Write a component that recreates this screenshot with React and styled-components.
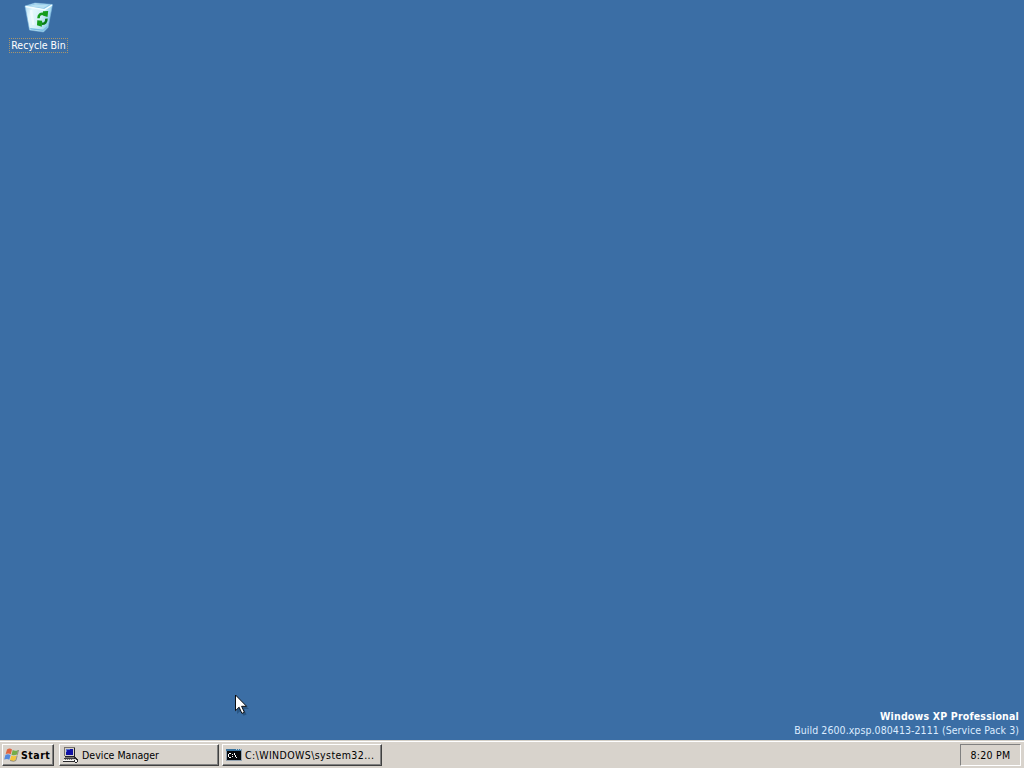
import React from 'react';
import styled, { createGlobalStyle } from 'styled-components';

const tasks = [
    { id: 1, title: 'Device Manager', icon: ComputerIcon, spacing: '0.02px' },
    { id: 2, title: 'C:\\WINDOWS\\system32...', icon: ConsoleIcon, spacing: '0.4px' },
];

export default function App(){
    return(
        <Screen>
            <GlobalStyle />
            <Desktop>
                <Shortcut>
                    <RecycleBinIcon />
                    <ShortcutName>Recycle Bin</ShortcutName>
                </Shortcut>
                <Version>
                    <Edition $spacing="0.19px">Windows XP Professional</Edition>
                    <Build $spacing="0.07px">Build 2600.xpsp.080413-2111 (Service Pack 3)</Build>
                </Version>
            </Desktop>
            <Taskbar>
                <StartButton>
                    <WindowsLogo />
                    <StartText $spacing="0.5px">Start</StartText>
                </StartButton>
                <TaskList>
                    {tasks.map(({ id, title, icon: Icon, spacing }) => (
                        <TaskButton key={id}>
                            <Icon />
                            <Label $spacing={spacing}>{title}</Label>
                        </TaskButton>
                    ))}
                </TaskList>
                <Tray>
                    <Label $spacing="0.3px">8:20 PM</Label>
                </Tray>
            </Taskbar>
            <Pointer />
        </Screen>
    )
}

function RecycleBinIcon(){
    return(
        <svg width="32" height="34" viewBox="0 0 32 34">
            <defs>
                <linearGradient id="glass" x1="0" y1="0" x2="1" y2="0.4">
                    <stop offset="0" stopColor="#a5d6f2" />
                    <stop offset="0.3" stopColor="#e6f8fd" />
                    <stop offset="0.65" stopColor="#d3f1f8" />
                    <stop offset="1" stopColor="#8fcdec" />
                </linearGradient>
            </defs>
            <path d="M2 6 12 3l17.5 1.5L25 27.5 20.5 32 6.5 30z" fill="url(#glass)" stroke="#7db8df" strokeWidth="0.6" />
            <path d="m2.7 6.3 9.3-2.8 17 1.5-7.5 4.5z" fill="#8cc7e9" />
            <path d="m5 6.3 7.5-2 13 1-5 2.7z" fill="#b6e0f2" />
            <path d="m2.5 6.5 19 3.2L29 5" fill="none" stroke="#f4ffff" strokeWidth="1.4" />
            <path d="m7 28 13 1.5 4.5-3.7-.6 2.2-3.9 3-12.3-1.4z" fill="#79bce4" />
            <path d="m8 10 2.5 15" stroke="#f5feff" strokeWidth="2.5" opacity="0.7" />
            <path d="M15.5 18.2c0-3.5 2.3-5 5-4.2" fill="none" stroke="#149c1b" strokeWidth="2.6" />
            <path d="m20 11.2 5.2-.2-.7 6-4.7-1.4z" fill="#149c1b" />
            <path d="M23.4 18.7c.3 3.4-1.6 5.2-4.7 5.1" fill="none" stroke="#087b16" strokeWidth="2.6" />
            <path d="m14.3 20.2 4.8.5-.3 6-4.8-1.5z" fill="#149c1b" />
        </svg>
    )
}

function WindowsLogo(){
    return(
        <svg width="16" height="16" viewBox="0 0 16 16">
            <path d="M3 2.4c2-1.2 3.5-1 5 .1L6.8 7.3C5.2 6.2 3.7 6.1 1.7 7z" fill="#df6540" />
            <path d="M8.7 3c1.7 1 3.2 1 5.5-.1l-1.3 4.7c-2 1-3.7 1-5.4.1z" fill="#75ad49" />
            <path d="M1.5 7.8c2-.9 3.5-.8 5.1.3l-1.3 4.7c-1.5-1.1-3.1-1.1-5.1-.2z" fill="#5489dd" />
            <path d="M7.3 8.5c1.7 1 3.3.9 5.4-.1l-1.3 4.8c-2.1 1.1-3.7 1-5.4 0z" fill="#f3c43a" />
            <path d="m14.6 3-1.3 4.9M13.2 8.6l-1.3 4.9-2.4.8-3.5-.8" fill="none" stroke="#77725f" strokeWidth="0.7" />
        </svg>
    )
}

function ComputerIcon(){
    return(
        <svg width="16" height="16" viewBox="0 0 16 16" shapeRendering="crispEdges">
            <path d="M1 0h11v10H1z" fill="#d4d0c8" />
            <path d="M1 0h11v1H2v8H1z" fill="#77736e" />
            <path d="M11 1h1v9H2V9h9z" fill="#22212d" />
            <path d="M3 2h7v6H3z" fill="#1010a4" />
            <path d="M3 2h4v1H3zM3 3h1v2H3z" fill="#5470d5" />
            <path d="M2 10h9v1H2z" fill="#77736e" />
            <path d="M1 11h11v2H1z" fill="#d8d5d0" />
            <path d="M1 11h11v1H1z" fill="#3b3b42" />
            <path d="M2 12h1v1H2zM4 12h1v1H4zM6 12h1v1H6zM8 12h1v1H8z" fill="#77736e" />
            <path d="M0 13h12v1H0z" fill="#f8f8f8" />
            <path d="M0 14h12v1H0z" fill="#29282b" />
            <path d="M11 10h2v1h1v1h1v3h-1v1h-2v-1h-1v-2h2v-1h-2z" fill="#29282b" />
            <path d="M12 13h2v2h-2z" fill="#f8f8f8" />
        </svg>
    )
}

function ConsoleIcon(){
    return(
        <svg width="16" height="16" viewBox="0 0 16 16" shapeRendering="crispEdges">
            <path d="M0 2h16v12H0z" fill="#92a1b0" />
            <path d="M0 2h15v2H0z" fill="#39739f" />
            <path d="M10 2h1v1h-1zM12 2h1v1h-1zM14 2h1v1h-1z" fill="#b2cede" />
            <path d="M1 4h14v9H1z" fill="#05080b" />
            <path d="M3 6h2v1H3v3h2v1H3v-1H2V7h1zM6 7h1v1H6zM6 9h1v1H6zM8 6h1v2h1v2h1v1h-1v-1H9V8H8z" fill="#fff" />
        </svg>
    )
}

function Pointer(){
    return(
        <PointerArrow width="14" height="23" viewBox="0 0 14 23">
            <path d="M2 3v17l4-3.6 2.5 5.4 3-1.4L9 15h5z" fill="#173d64" opacity="0.5" />
            <path d="M.5 1v15.7l3.6-3.5 2.8 6.2 2.5-1.1-2.8-6h5z" fill="#fff" stroke="#080b10" strokeWidth="1" />
        </PointerArrow>
    )
}

const GlobalStyle = createGlobalStyle`
    *{
        box-sizing:border-box;
    }
    body{
        margin:0;
        overflow:hidden;
        font:11px/14px "DejaVu Sans Condensed", "DejaVu Sans", sans-serif;
        font-stretch:condensed;
    }
    svg{
        display:block;
        flex:none;
    }
`;
const Screen = styled.main`
    width:100vw;
    height:100vh;
    display:flex;
    flex-direction:column;
    cursor:default;
`;
const Desktop = styled.section`
    flex:1;
    display:flex;
    flex-direction:column;
    justify-content:space-between;
    background:#3b6ea5;
    color:white;
`;
const Shortcut = styled.div`
    width:77px;
    display:flex;
    flex-direction:column;
    align-items:center;
`;
const Label = styled.span`
    font-size:10.5px;
    line-height:14px;
    letter-spacing:${({ $spacing }) => $spacing || '0'};
    white-space:nowrap;
`;
const ShortcutName = styled(Label)`
    margin-top:4px;
    padding:0 1px;
    border:1px dotted #a9956b;
    line-height:13px;
`;
const Version = styled.div`
    display:flex;
    flex-direction:column;
    align-items:flex-end;
    padding:0 5px 3px 0;
`;
const Edition = styled(Label)`
    font-weight:bold;
`;
const Build = styled(Label)`
    color:#dcecff;
`;
const Taskbar = styled.footer`
    height:28px;
    display:flex;
    align-items:flex-start;
    padding:3px 3px 2px 2px;
    background:#d8d3cc;
    border-top:1px solid #d4d0c8;
    box-shadow:inset 0 1px #fff;
`;
const RaisedButton = styled.button`
    height:22px;
    display:flex;
    align-items:center;
    padding:0 2px;
    color:#000;
    background:#d8d3cc;
    border:1px solid;
    border-color:#fff #404040 #404040 #fff;
    box-shadow:inset -1px -1px #808080;
    font-family:inherit;
    font-stretch:inherit;
`;
const StartButton = styled(RaisedButton)`
    width:52px;
    padding:0 1px;
`;
const StartText = styled(Label)`
    margin-left:1px;
    font-weight:bold;
`;
const TaskList = styled.nav`
    flex:1;
    display:flex;
    gap:3px;
    margin-left:5px;
`;
const TaskButton = styled(RaisedButton)`
    width:160px;
    gap:3px;
    padding:0 3px;
`;
const Tray = styled.div`
    width:61px;
    height:22px;
    display:flex;
    align-items:center;
    justify-content:center;
    border:1px solid;
    border-color:#808080 #fff #fff #808080;
`;
const PointerArrow = styled.svg`
    position:absolute;
    left:235px;
    top:694px;
    pointer-events:none;
`;
